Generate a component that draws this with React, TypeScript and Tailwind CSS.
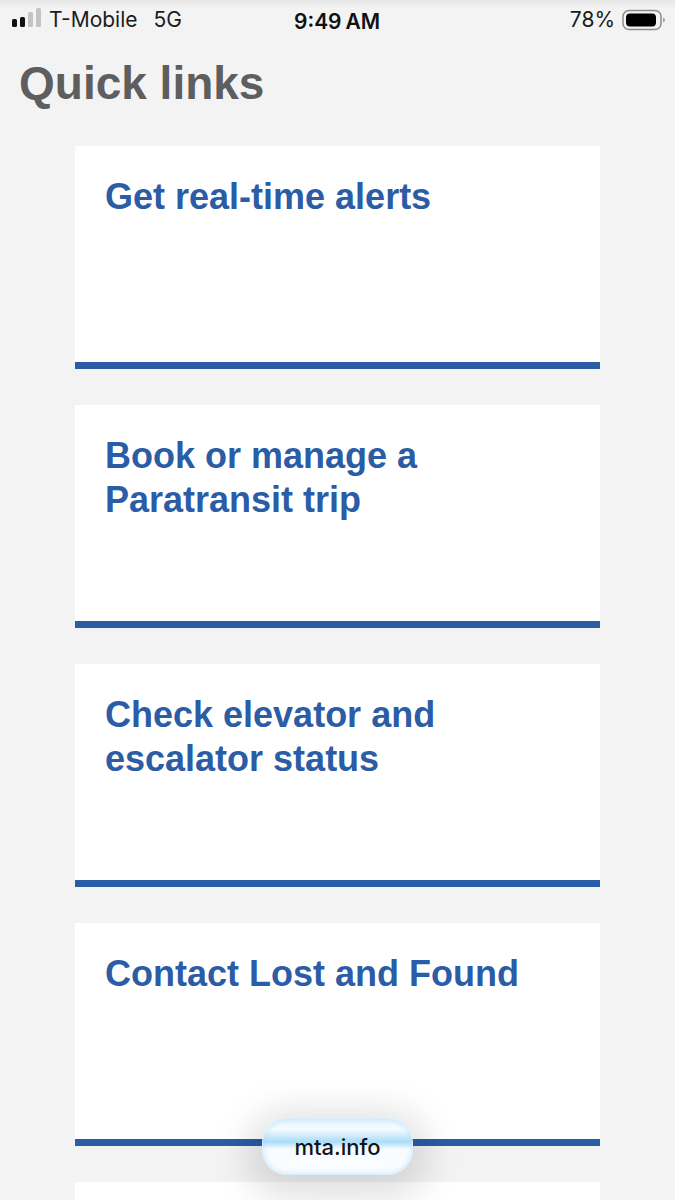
const links = [
  ['Get real-time alerts'],
  ['Book or manage a', 'Paratransit trip'],
  ['Check elevator and', 'escalator status'],
  ['Contact Lost and Found'],
];

function SignalBars() {
  return (
    <svg width="30" height="24" viewBox="0 0 30 24" className="shrink-0">
      <rect x="0" y="11" width="5" height="8" rx="1.5" fill="#111" />
      <rect x="8" y="9" width="5" height="10" rx="1.5" fill="#111" />
      <rect x="16" y="4" width="5" height="15" rx="1.5" fill="#c4c4c4" />
      <rect x="24" y="0" width="5" height="19" rx="1.5" fill="#c4c4c4" />
    </svg>
  );
}

function Battery() {
  return (
    <svg width="44" height="22" viewBox="0 0 44 22" className="shrink-0">
      <rect x="1" y="1.5" width="38" height="19" rx="6" fill="none" stroke="#8c8c8c" strokeWidth="1.5" />
      <rect x="4" y="4.5" width="30" height="13" rx="4" fill="#000" />
      <path d="M41 8.5c1.5.5 2 1.5 2 2.5s-.5 2-2 2.5z" fill="#a8a8a8" />
    </svg>
  );
}

function StatusBar() {
  return (
    <div className="relative flex h-[38px] items-center justify-between bg-gradient-to-b from-[#e6e6e6] to-[#f3f3f3] to-[22%] pl-[12px] pr-[9px] pt-[1px] font-['Inter',sans-serif] text-[21px] text-[#1c1c1c]">
      <div className="flex items-center">
        <SignalBars />
        <span className="ml-[7px]">T-Mobile</span>
        <span className="ml-[16px]">5G</span>
      </div>
      <div className="absolute left-[294px] top-[6px] text-[21px] font-semibold text-[#111]">
        9:49<span className="ml-[4px]">AM</span>
      </div>
      <div className="flex items-center gap-[7px]">
        <span>78%</span>
        <Battery />
      </div>
    </div>
  );
}

function LinkCard({ lines }: { lines: string[] }) {
  return (
    <a className="block h-[223px] border-b-[7px] border-[#2b5ca6] bg-white px-[30px] pt-[29px] text-[36px] leading-[44px] font-bold text-[#2b5ca6]">
      {lines.map((line) => (
        <div key={line}>{line}</div>
      ))}
    </a>
  );
}

export default function App() {
  return (
    <div className="relative h-[1200px] overflow-hidden bg-[#f3f3f3] font-['Liberation_Sans',Arial,sans-serif]">
      <StatusBar />
      <h2 className="mt-[18px] ml-[19px] text-[46px] leading-[55px] font-bold text-[#5e5e5e]">Quick links</h2>
      <div className="mt-[35px] ml-[75px] flex w-[525px] flex-col gap-[36px]">
        {links.map((lines) => (
          <LinkCard key={lines[0]} lines={lines} />
        ))}
        <div className="h-[223px] bg-white" />
      </div>

      {/* Floating address pill */}
      <div className="absolute left-[262px] top-[1118px] h-[57px] w-[151px] overflow-hidden rounded-[25px] border border-[#d8eefc] bg-gradient-to-b from-[#e3f3fe] via-[#f6fbff] via-[18%] to-[#fbfdff] shadow-[0_8px_36px_14px_rgba(0,0,0,0.13),inset_0_0_5px_1px_rgba(160,215,250,0.45)]">
        <div className="mt-[10px] h-[20px] bg-gradient-to-b from-transparent via-[#aadcf9] via-[65%] to-transparent" />
        <div className="absolute inset-0 flex items-center justify-center pt-[1px] font-['Inter',sans-serif] text-[22px] font-medium text-[#10141c]">
          mta.info
        </div>
      </div>
    </div>
  );
}
